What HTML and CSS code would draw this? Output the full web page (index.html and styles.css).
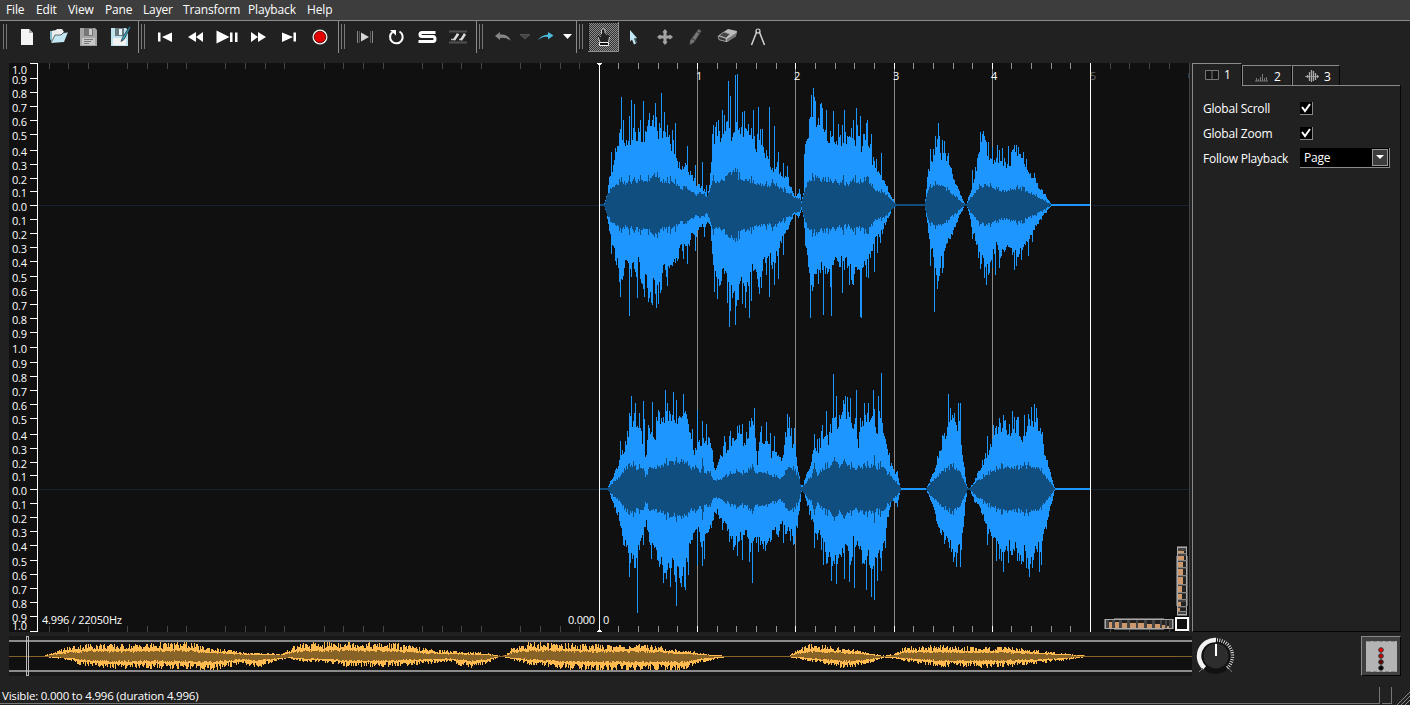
FILE: index.html
```html
<!DOCTYPE html>
<html lang="en">
<head>
<meta charset="utf-8">
<title>Audio viewer</title>
<link rel="stylesheet" href="styles.css">
</head>
<body>
<div class="window">
  <nav class="menubar">
    <span class="m-file">File</span><span class="m-edit">Edit</span><span class="m-view">View</span><span class="m-pane">Pane</span><span class="m-layer">Layer</span><span class="m-transform">Transform</span><span class="m-playback">Playback</span><span class="m-help">Help</span>
  </nav>
  <div class="toolbars">
    <div class="bar bar-file"><i class="handle"></i>
      <svg class="ico" viewBox="0 0 31 30"><path d="M9 7h8l4 4v12H9z" fill="#f4f4f4"/><path d="M17 7v4h4z" fill="#aaa"/></svg>
      <svg class="ico" viewBox="0 0 31 30"><path d="M8 9l5-1 1-1h5l2 3-10 9-3 2z" fill="#eee"/><path d="M7 9l2 0v11l-2-3z" fill="#86bdcb"/><path d="M8 21l4-8 6 0 2-2 5-1-4 10z" fill="#c2e7f3"/><path d="M8 21l4-8h6l2-2 5-1" fill="none" stroke="#333" stroke-width=".7"/></svg>
      <svg class="ico" viewBox="0 0 31 30"><path d="M6 6h15l2 2v16H6z" fill="#a5a5a5"/><path d="M10 6h9v8h-9z" fill="#777"/><path d="M15 7h3v6h-3z" fill="#ccc"/><path d="M8 16h13v7H8z" fill="#c7c7c7"/><path d="M10 17.500h9M10 19.500h7M10 21.500h5" stroke="#777"/></svg>
      <svg class="ico" viewBox="0 0 31 30"><path d="M6 6h15l2 2v16H6z" fill="#bfe2ec"/><path d="M10 6h9v8h-9z" fill="#687980"/><path d="M14 7h3v6h-3z" fill="#e8f4f7"/><path d="M8 16h13v7H8z" fill="#f2f2f2"/><path d="M24.500 4.500l-7 11-1.500 4 3-2 6.500-12z" fill="#37a4c0" stroke="#24363c" stroke-width=".8"/></svg>
    </div>
    <div class="bar bar-play"><i class="handle"></i>
      <svg class="ico" viewBox="0 0 31 30"><path d="M8 10.500h2.500v9H8zM22 10.500v9.500L12 15z" fill="#fff"/></svg>
      <svg class="ico" viewBox="0 0 31 30"><path d="M15 10v10l-8-5zM22 10v10l-7-5z" fill="#fff"/></svg>
      <svg class="ico" viewBox="0 0 31 30"><path d="M4.500 8.500v13l13-6.500zM18 10.500h2.500v9.500H18zM23 10.500h2.500v9.500H23z" fill="#fff"/></svg>
      <svg class="ico" viewBox="0 0 31 30"><path d="M8 10v10l7-5zM15 10v10l8-5z" fill="#fff"/></svg>
      <svg class="ico" viewBox="0 0 31 30"><path d="M8 10.500v9.500l11-5zM19.500 10.500H22v9h-2.500z" fill="#fff"/></svg>
      <svg class="ico" viewBox="0 0 31 30"><circle cx="15" cy="15" r="7.500" fill="#f5f5f5"/><circle cx="15" cy="15" r="5.800" fill="#e40000" stroke="#400" stroke-width=".8"/></svg>
    </div>
    <div class="bar bar-mode"><i class="handle"></i>
      <svg class="ico" viewBox="0 0 31 30"><path d="M7.500 9v12M22.500 9v12" stroke="#8a8a8a"/><path d="M9.500 9v12M20.500 9v12" stroke="#555"/><path d="M11 10.500v9l8-4.500z" fill="#d5d5d5"/></svg>
      <svg class="ico" viewBox="0 0 31 30"><path d="M18.500 9.500a6.300 6.300 0 1 1-7 .5" fill="none" stroke="#fff" stroke-width="2"/><path d="M9 8h6v5.500z" fill="#fff"/></svg>
      <svg class="ico" viewBox="0 0 31 30"><path d="M23.500 10.500H10q-2 0-2 2t2 2h11q2 0 2 2.500t-2 2.500H6.500" fill="none" stroke="#fff" stroke-width="3"/></svg>
      <svg class="ico" viewBox="0 0 31 30"><path d="M6 9.500h18M6 20.500h18" stroke="#505050" stroke-width="2"/><path d="M8 17.500h3M13 12.500h3M16 17.500h3M20 12.500h2" fill="none" stroke="#bbb" stroke-width="1.500"/><path d="M15 12l-4 6M22 12l-4 6" stroke="#ddd" stroke-width="2.400"/></svg>
    </div>
    <div class="bar bar-edit"><i class="handle"></i>
      <svg class="ico" viewBox="0 0 31 30"><path d="M7 14l5-4v2.500q8-1 11 6.500-5-4-11-3v2z" fill="#858585"/></svg>
      <svg class="ico-drop" viewBox="0 0 12 30"><path d="M1 12.500h10L6 17z" fill="#444" stroke="#666" stroke-width=".6"/></svg>
      <svg class="ico" viewBox="0 0 31 30"><path d="M7 18.500q2-5 10-6V10l5.500 3.500-5.500 4v-2.500q-6-1-10 3.500z" fill="#4cbada"/></svg>
      <svg class="ico-drop" viewBox="0 0 12 30"><path d="M1 12h9l-4.500 5z" fill="#fff"/></svg>
    </div>
    <div class="bar bar-tools"><i class="handle"></i>
      <svg class="ico ico-active" viewBox="0 0 31 30"><defs><pattern id="dither" width="2" height="2" patternUnits="userSpaceOnUse"><path d="M0 0h1v1H0zM1 1h1v1H1z" fill="#8b8b8b"/></pattern></defs><rect width="31" height="30" fill="#333"/><rect width="31" height="30" fill="url(#dither)"/><path d="M0 .5h30M.5 1v29" stroke="#191919"/><path d="M30.500 0v29.500H0" fill="none" stroke="#909090"/><path d="M14 8q1.500-2 3 0v4.500l4 1 1 1-1 6h-9l-3-5 1-2 3 2z" fill="#222"/><path d="M13.500 12V8q1.500-3 3.500 0v3M10 15l2 5M21.500 15l-1 5" fill="none" stroke="#ccc"/><path d="M11.500 20.500h9v3h-9z" fill="#111" stroke="#eee"/></svg>
      <svg class="ico" viewBox="0 0 31 30"><path d="M11 8l7 8-3 .5 2 5-2 1-2-5-2 2z" fill="#c2e8f5"/><path d="M18 16l-2 1 2 4" fill="none" stroke="#54717d"/></svg>
      <svg class="ico" viewBox="0 0 31 30"><path d="M15 7l2.500 3-1 1v2.500H19l1-1L23 15l-3 2.500-1-1h-2.500V19l1 1L15 23l-2.500-3 1-1v-2.500H11l-1 1L7 15l3-2.500 1 1h2.500V11l-1-1z" fill="#a2a2a2"/></svg>
      <svg class="ico" viewBox="0 0 31 30"><path d="M17.500 7.500l2.500 1.500-7 11-4 2.500.5-4z" fill="#777" stroke="#666" stroke-width=".7"/><path d="M16 9.500l3 2M11 16.500l3 2" stroke="#333"/></svg>
      <svg class="ico" viewBox="0 0 31 30"><path d="M6 14l10-7 9 2-1 5-9 6-8-2z" fill="#bcbcbc"/><path d="M7 13.500l5-3.500 6 2-4 4z" fill="#444" stroke="#aaa" stroke-width=".7"/><path d="M6 14l8 2.500v3l-7-2z" fill="#333" stroke="#aaa" stroke-width=".7"/><path d="M15 17l9-6v3.500l-9 5z" fill="#777"/></svg>
      <svg class="ico" viewBox="0 0 31 30"><path d="M14 9L8.500 23M16 9l5.500 14" stroke="#d2d2d2" stroke-width="1.500"/><circle cx="15" cy="9" r="2" fill="#222" stroke="#ddd" stroke-width="1.200"/></svg>
    </div>
  </div>
  <main class="workspace">
    <section class="pane">
      <svg id="pane" class="pane-view" viewBox="9 63 1181 569" width="1181" height="569"></svg>
    </section>
    <aside class="side">
      <div class="tabs">
        <div class="tab tab-on"><svg width="15" height="11" viewBox="0 0 15 11"><path d="M.5.5h13v9H.5zM7 .5v9" fill="#151515" stroke="#777"/></svg><span>1</span></div>
        <div class="tab tab-two"><svg width="15" height="11" viewBox="0 0 15 11"><path d="M1.500 7v3M3.500 8v2M5.500 6v4M7.500 3v7M9.500 7v3M11.500 6v4M0 10h13" stroke="#777"/></svg><span>2</span></div>
        <div class="tab tab-three"><svg width="15" height="13" viewBox="0 0 15 13"><path d="M0 6.500h14" stroke="#888"/><path d="M2.500 5v3M4.500 2v9M6.500 0v12M8.500 1v10M10.500 3v7M12.500 5v3" stroke="#aaa" stroke-width="1.300"/></svg><span>3</span></div>
      </div>
      <div class="page">
        <div class="row"><span class="lab lab-scroll">Global Scroll</span><span class="check"><svg width="10" height="10" viewBox="0 0 10 10"><path d="M1 4l3 4 5-7" fill="none" stroke="#fff" stroke-width="2"/></svg></span></div>
        <div class="row"><span class="lab lab-zoom">Global Zoom</span><span class="check"><svg width="10" height="10" viewBox="0 0 10 10"><path d="M1 4l3 4 5-7" fill="none" stroke="#fff" stroke-width="2"/></svg></span></div>
        <div class="row"><span class="lab">Follow Playback</span><span class="combo"><span class="value">Page</span><i class="drop"><svg width="8" height="4" viewBox="0 0 8 4"><path d="M0 0h8L4 4z" fill="#fff"/></svg></i></span></div>
      </div>
    </aside>
  </main>
  <footer class="transport">
    <svg id="overview" class="overview" viewBox="9 636 1183 40" width="1183" height="40"></svg>
    <svg class="knob" viewBox="1196 636 40 40" width="40" height="40">
      <circle cx="1215.500" cy="656" r="17.800" fill="#111"/>
      <circle cx="1216" cy="656" r="12.500" fill="#2d2d2d"/>
      <path d="M1204.500 668A16 16 0 0 1 1216 640" fill="none" stroke="#f2f2f2" stroke-width="4.500"/>
      <path d="M1217 640A16 16 0 0 1 1227 668" fill="none" stroke="#e0e0e0" stroke-width="3.500" stroke-dasharray="1 1.300"/>
      <path d="M1216 644v12" stroke="#fff" stroke-width="2"/><path d="M1199 672l4-4M1232 672l-5-6" stroke="#777"/>
    </svg>
    <div class="meter"><svg width="31" height="31" viewBox="0 0 31 31"><rect width="31" height="31" rx="1" fill="#b4b4b4"/><path d="M1 .5h29M1 30.500h29" stroke="#888" stroke-dasharray="4 2"/><g stroke="#333"><circle cx="15" cy="9" r="2.300" fill="#f00"/><circle cx="15" cy="15" r="2.300" fill="#c00000"/><circle cx="15" cy="21" r="2.300" fill="#620000"/><circle cx="15" cy="27" r="2.300" fill="#000"/></g></svg></div>
  </footer>
  <div class="status">
    <div class="message"><span>Visible: 0.000 to 4.996 (duration 4.996)</span></div>
    <div class="slot"></div>
    <svg class="grip" width="18" height="18" viewBox="0 0 18 18"><path d="M5 18L18 5M9 18l9-9M13 18l5-5" stroke="#888"/></svg>
  </div>
</div>
<script src="script.js"></script>
</body>
</html>
```

FILE: styles.css
```css
* { box-sizing: border-box; }
body { margin: 0; background: #212121; color: #fff; font: 11.5px/16px "Open Sans", "Noto Sans", sans-serif; }
.window { width: 1410px; height: 705px; display: flex; flex-direction: column; overflow: hidden; }
svg { display: block; flex: none; }

.menubar { height: 20px; flex: none; display: flex; padding: 2px 0 0 6px; background: #3d3d3d; font-size: 12px; letter-spacing: -.15px; white-space: nowrap; }
.m-file { width: 30px; }
.m-edit { width: 32px; }
.m-view { width: 37px; }
.m-pane { width: 38px; }
.m-layer { width: 40px; }
.m-transform { width: 65px; }
.m-playback { width: 59px; }

.toolbars { height: 33px; flex: none; display: flex; }
.bar { display: flex; padding-top: 1px; border-top: 1px solid #8a8a8a; border-left: 1px solid #8a8a8a; }
.bar-file { width: 138px; border-left: 0; padding-left: 1px; }
.bar-play { width: 200px; }
.bar-mode { width: 138px; }
.bar-edit { width: 100px; }
.bar-tools { flex: 1; }
.handle { flex: none; width: 4px; height: 25px; margin: 2px 5px 0 2px; border-left: 1px solid #777; border-right: 1px solid #777; }
.ico { width: 31px; height: 30px; }
.ico-drop { width: 12px; height: 30px; }

.workspace { height: 579px; flex: none; display: flex; padding: 10px 0 0 9px; }
.pane { width: 1181px; background: #101010; border-right: 1px solid #444; }
.pane-view { font-size: 11px; fill: #fff; }
.dim { fill: #666; }

.side { width: 209px; margin-left: 2px; display: flex; flex-direction: column; }
.tabs { display: flex; height: 22px; align-items: flex-end; }
.tab { display: flex; align-items: center; border-top: 1px solid #8a8a8a; border-right: 1px solid #050505; border-left: 1px solid #8a8a8a; height: 20px; gap: 4px; font-size: 12px; }
.tab-on { width: 50px; height: 22px; padding: 1px 0 0 12px; }
.tab-two { width: 50px; padding: 2px 0 0 12px; }
.tab-three { width: 48px; padding: 2px 0 0 12px; }
.page { flex: 1; padding: 11px 10px 0 10px; border-left: 1px solid #8a8a8a; border-right: 1px solid #050505; border-bottom: 1px solid #050505; background: linear-gradient(#8a8a8a, #8a8a8a) 49px 0 / 160px 1px no-repeat; }
.row { display: flex; height: 25px; align-items: center; }
.lab { width: 97px; padding-top: 1px; font-size: 12px; letter-spacing: -.2px; white-space: nowrap; }
.check { width: 13px; height: 13px; padding: 1px; background: #000; border-right: 1px solid #8a8a8a; border-bottom: 1px solid #8a8a8a; }
.combo { display: flex; width: 90px; height: 20px; margin-top: -2px; padding-left: 4px; align-items: center; justify-content: space-between; background: #000; border-right: 1px solid #8a8a8a; border-bottom: 1px solid #8a8a8a; font-size: 12px; letter-spacing: -.2px; }
.value { padding-top: 2px; }
.drop { width: 16px; height: 17px; margin-right: 1px; display: flex; align-items: center; justify-content: center; background: #3c3c3c; border: 1px solid #999; }

.transport { height: 55px; flex: none; display: flex; padding: 4px 9px 0; }
.knob { margin-left: 4px; }
.meter { margin-left: auto; width: 40px; height: 40px; padding: 4px; background: #404040; border: 1px solid #8a8a8a; border-right-color: #050505; border-bottom-color: #050505; }

.status { height: 18px; flex: none; display: flex; }
.message { width: 1380px; height: 17px; padding-left: 2px; border-right: 1px solid #777; border-bottom: 1px solid #777; line-height: 17px; letter-spacing: -.2px; }
.slot { width: 10px; height: 17px; margin-left: 2px; border-right: 1px solid #777; border-bottom: 1px solid #777; }
```

FILE: script.js
```js
// Peak tables: horizontal and vertical units are thirds of a pixel.
const parse = s => s.trim().split(/\s+/).map(p => p.split(',').map(Number));
const ch1 = {
  y: 205, c: 435,
  top: `30,433 42,433 50,405 55,385 60,340 66,335 74,290 82,255 88,215 100,230 108,260 118,225 128,250 134,220 142,235 150,210 165,240 175,185 190,185 200,220 208,200 220,205 230,215 240,255 250,260 262,310 272,315 285,325 300,335 310,360 320,375 330,375 345,395 352,405 362,345 367,250 375,215 385,215 395,240 405,195 415,190 425,230 435,180 445,180 455,200 465,220 475,215 490,215 500,260 510,235 520,285 530,275 540,310 550,330 562,320 575,345 590,350 605,385 612,405 620,410 628,385 634,420 640,400 645,250 655,240 662,160 672,165 682,200 692,160 700,200 712,230 725,235 740,240 750,225 762,250 770,240 790,210 798,240 805,210 812,270 820,230 830,220 838,240 846,300 855,310 865,325 875,345 885,375 895,390 905,410 915,430 924,433 1004,433 1010,375 1016,325 1025,300 1033,270 1040,235 1047,250 1053,290 1060,255 1068,290 1076,300 1086,340 1095,360 1105,385 1115,410 1124,433 1130,433 1135,410 1142,395 1150,370 1158,330 1166,270 1174,245 1182,225 1190,260 1200,300 1210,300 1220,290 1230,300 1240,305 1250,315 1260,320 1268,270 1276,260 1284,300 1295,290 1305,320 1315,325 1325,350 1335,355 1345,380 1355,390 1365,405 1375,420 1384,433 1500,433`,
  topSpikes: `64,275 94,112 100,180 118,168 124,120 134,132 152,180 160,123 176,180 188,180 196,128 214,100 223,155 248,210 256,188 292,258 316,315 337,305 350,375 386,180 398,150 404,165 415,64 421,108 436,45 442,42 457,155 463,152 484,205 490,150 505,142 517,208 538,142 553,198 565,275 580,310 592,318 670,84 691,132 709,150 730,152 746,192 763,150 772,228 758,195 763,150 785,205 790,180 799,143 803,195 811,167 832,180 844,222 874,278 893,378 1021,268 1036,228 1045,188 1057,240 1075,280 1147,330 1180,213 1189,245 1207,262 1222,255 1237,265 1255,258 1264,275 1273,256 1279,255 1285,260 1300,275 1309,298 1321,340 1333,338`,
  bottom: `30,437 42,437 52,470 58,510 66,545 75,580 82,600 88,665 98,670 105,615 112,620 120,640 130,620 138,655 146,575 155,680 165,625 175,700 185,700 192,680 200,720 210,665 220,635 230,640 240,630 250,620 260,595 270,560 280,560 295,550 305,530 315,520 325,515 335,495 345,500 355,490 362,500 366,580 372,650 380,660 390,670 400,640 408,660 418,715 430,690 440,690 450,660 460,650 470,690 480,665 490,625 500,645 510,660 520,615 530,610 540,600 550,600 560,590 570,560 580,530 590,515 600,490 612,465 628,470 636,445 642,490 650,580 658,630 665,670 675,640 685,640 695,620 705,630 715,650 725,630 735,615 745,600 755,610 770,600 785,640 800,620 812,640 825,620 838,600 845,560 855,540 865,530 875,520 885,490 895,470 905,450 915,440 924,437 1004,437 1010,480 1016,530 1025,570 1033,620 1040,650 1050,620 1060,590 1070,550 1085,530 1095,500 1105,475 1115,455 1124,437 1130,437 1140,470 1150,520 1160,560 1170,590 1182,605 1190,630 1200,600 1210,580 1222,550 1230,590 1242,570 1255,555 1268,580 1280,590 1295,570 1310,550 1325,530 1335,500 1350,485 1365,460 1384,437 1500,437`,
  bottomSpikes: `64,582 91,712 118,768 142,715 163,712 184,730 200,745 214,690 232,678 280,598 292,612 316,574 343,532 373,695 382,718 417,802 436,794 457,733 466,745 478,775 484,722 505,682 514,684 538,712 553,676 565,658 580,585 661,775 700,765 724,768 757,698 778,676 787,672 812,770 815,775 829,652 835,655 853,635 862,578 871,550 1021,618 1033,757 1042,688 1057,638 1147,538 1171,628 1183,655 1189,674 1207,625 1216,646 1228,625 1273,630 1285,590 1315,588 1327,545`,
  inner: `30,2 42,2 50,25 60,45 75,60 90,75 114,62 118,95 122,65 150,75 180,78 200,82 225,70 250,72 275,50 300,48 315,30 335,38 350,22 362,50 370,75 400,75 415,95 437,108 445,85 460,80 490,70 510,65 540,58 550,70 565,55 580,45 600,35 612,22 628,22 634,5 640,30 650,65 665,78 680,80 700,72 740,72 755,65 758,90 762,60 790,75 810,72 835,75 850,50 875,40 895,25 910,8 922,2 1004,2 1012,40 1025,58 1040,62 1055,60 1075,45 1095,28 1110,12 1124,2 1130,2 1140,20 1155,40 1170,55 1190,58 1207,55 1225,45 1250,42 1285,52 1310,42 1340,28 1360,15 1384,1 1500,1`
};
const ch2 = {
  y: 489, c: 387,
  top: `30,385 52,385 60,370 66,355 75,340 84,315 90,290 100,270 108,260 115,215 122,200 135,180 145,200 155,240 163,215 167,310 175,205 185,220 195,240 205,190 218,210 228,155 240,155 250,145 262,180 275,145 282,130 292,185 302,210 308,240 315,290 325,240 335,270 345,240 355,250 365,280 375,325 385,305 395,290 405,270 415,255 425,240 435,225 445,210 455,240 465,240 475,240 482,185 492,190 502,305 510,230 522,250 535,245 545,290 555,265 565,285 575,310 585,270 592,210 600,200 608,270 615,230 622,320 632,375 640,375 648,340 660,330 668,280 675,250 685,270 695,235 705,210 715,240 725,190 735,165 745,195 755,170 765,150 780,150 788,205 798,170 805,250 812,200 825,160 838,190 847,170 853,150 860,240 868,160 876,185 885,225 895,285 905,320 915,335 922,330 929,375 931,385 1008,385 1016,370 1025,355 1035,330 1047,285 1058,240 1070,205 1078,190 1088,170 1100,200 1106,180 1114,250 1122,310 1128,370 1133,385 1138,385 1150,370 1160,350 1172,330 1185,290 1195,280 1205,240 1215,210 1228,195 1242,210 1255,205 1270,210 1280,200 1295,230 1305,215 1318,180 1330,200 1340,180 1355,205 1362,270 1372,300 1382,345 1394,385 1500,385`,
  topSpikes: `91,242 118,158 124,108 136,130 148,160 160,123 187,125 199,172 208,155 226,90 249,95 259,120 280,102 292,178 322,150 337,182 349,192 358,235 403,228 421,212 442,198 457,192 484,175 493,145 514,198 529,185 541,218 553,228 586,215 592,162 598,172 613,205 673,222 698,195 709,152 730,42 739,108 759,120 773,112 780,115 799,90 823,128 835,128 850,90 865,108 874,38 1075,102 1082,143 1093,158 1105,128 1111,130 1192,228 1228,175 1240,165 1267,153 1285,170 1303,165 1315,162 1324,140 1333,132 1339,145`,
  bottom: `30,389 52,389 60,400 66,420 75,440 85,460 92,515 105,540 118,600 130,580 142,590 150,560 160,530 168,485 178,550 190,570 200,590 210,600 220,620 232,620 245,620 258,620 270,640 285,650 295,560 305,540 315,530 325,510 338,560 350,520 362,500 375,455 382,455 395,485 410,510 425,530 440,545 455,530 468,520 480,560 490,560 500,540 515,555 525,560 540,530 555,500 565,500 575,490 588,520 600,515 613,540 625,470 635,390 642,400 655,440 668,490 680,510 695,540 710,580 725,620 740,600 755,590 765,560 780,590 790,550 805,560 820,600 835,590 850,600 862,590 875,585 885,540 892,480 905,420 915,425 922,440 930,395 931,389 1008,389 1018,410 1030,440 1042,490 1055,520 1070,540 1085,570 1098,590 1110,560 1120,500 1126,430 1132,389 1140,390 1155,425 1168,440 1182,480 1195,500 1207,540 1220,560 1232,590 1245,570 1258,550 1272,560 1285,580 1300,570 1315,590 1328,600 1340,560 1355,580 1363,500 1375,470 1385,430 1394,389 1500,389`,
  bottomSpikes: `118,650 136,625 142,760 184,598 208,622 220,670 229,658 241,682 259,738 274,682 283,682 295,645 322,615 337,618 343,596 430,570 443,588 457,600 478,605 486,668 505,575 526,572 565,532 580,550 613,552 673,565 700,615 724,662 739,672 763,658 778,666 793,684 829,690 844,710 853,720 862,662 874,632 1090,606 1099,622 1111,620 1192,555 1219,602 1240,635 1255,608 1300,606 1318,650 1327,625 1348,635`,
  inner: `30,2 52,2 70,20 90,40 118,75 140,65 160,62 167,35 178,60 205,68 240,80 280,85 300,60 320,65 333,50 337,90 342,52 360,50 373,25 395,32 420,45 445,52 470,45 487,72 495,50 530,50 550,38 575,32 595,65 605,65 625,40 634,5 650,20 665,40 673,75 682,38 700,60 740,85 750,65 763,90 770,75 795,60 820,72 848,65 853,100 858,65 875,70 895,45 915,22 930,10 932,1 1008,1 1025,22 1050,45 1070,60 1088,68 1105,60 1120,30 1132,2 1138,2 1160,22 1190,45 1220,58 1240,66 1280,62 1300,68 1350,62 1365,40 1394,1 1500,1`
};

function at(points, x, col) {
  let i = 1;
  while (i < points.length - 1 && points[i][0] < x) i++;
  const a = points[i - 1], b = points[i];
  const t = Math.max(0, Math.min(1, (x - a[0]) / (b[0] - a[0])));
  return a[col] + (b[col] - a[col]) * t;
}
function noise(n, seed) {
  const v = Math.sin(n * 12.9898 + seed * 78.233) * 43758.5453;
  return v - Math.floor(v);
}
function columns(x0, x1, extent) {
  let d = '';
  for (let x = x0; x < x1; x++) {
    const [a, b] = extent(x);
    d += `M${x} ${a.toFixed(1)}h1V${b.toFixed(1)}h-1z`;
  }
  return d;
}
const spikeMap = s => new Map(parse(s).map(([x, y]) => [590 + Math.floor(x / 3), y]));
// Mostly small variation, with an occasional taller column.
const jitter = (x, seed) => .87 + .18 * noise(x, seed) + (noise(x, seed + 20) > .75 ? .17 : 0);

function channel(ch, seed) {
  const top = parse(ch.top), bottom = parse(ch.bottom), inner = parse(ch.inner);
  const ts = spikeMap(ch.topSpikes), bs = spikeMap(ch.bottomSpikes);
  const outer = columns(600, 1090, x => {
    const u = (x - 590) * 3 + 1;
    let a = ch.c - at(top, u, 1), b = at(bottom, u, 1) - ch.c;
    if (a > 4) a *= jitter(x, seed);
    if (b > 4) b *= jitter(x, seed + 1);
    if (ts.has(x)) a = ch.c - ts.get(x);
    if (bs.has(x)) b = bs.get(x) - ch.c;
    return [ch.y - a / 3, ch.y + b / 3];
  });
  const core = columns(600, 1090, x => {
    const v = at(inner, (x - 590) * 3 + 1, 1);
    const h = v * (v > 4 ? jitter(x, seed + 2) : 1) / 3;
    return [ch.y - h, ch.y + h];
  });
  return `<path d="M600 ${ch.y - 1}h490v2H600z" fill="#1c73bd"/><path d="${outer}" fill="#1e96ff"/><path d="${core}" fill="#104e80"/>`;
}

const label = (x, y, s, cls = '', w = 0) =>
  `<text x="${x}" y="${y}" class="${cls}"${w ? ` textLength="${w}"` : ''}>${s}</text>`;
let out = '<g shape-rendering="crispEdges">';
for (const y of [205, 489]) out += `<path d="M38 ${y}.5H599M1091 ${y}.5H1189" stroke="#152232"/>`;
for (let k = -28; k <= 29; k++) {
  const x = Math.floor(599.3 + k * 19.65), major = k % 5 === 0;
  if (major && (k < 0 || k > 25)) continue;
  const color = k < 0 || k > 25 ? '#464646' : major ? '#fff' : '#929292';
  if (major && k > 0) out += `<path d="M${x}.5 63V632" stroke="#8b8b8b"/>`;
  out += `<path d="M${x}.5 63v6M${x}.5 626v6" stroke="${color}"/>`;
}
out += channel(ch1, 3) + channel(ch2, 8);
out += '<path d="M599.5 63V632M1090.5 63V632M37.500 63V632" stroke="#fff"/><path d="M597 63h5v1h-1v1h-3v-1h-1zM597 632h5v-1h-1v-1h-3v1h-1z" fill="#fff"/>';
const scale = [63, 78, 92, 106, 120, 134, 150, 164, 178, 191, 205, 219, 233, 247, 261, 276, 290, 304, 318, 332];
let ys = '';
for (let i = 0; i <= 40; i++) {
  const y = i === 40 ? 631 : scale[i % 20] + (i >= 20 ? 284 : 0);
  out += `<path d="M30 ${y}.5h8" stroke="#fff"/>`;
  const value = Math.abs(10 - i % 20) / 10;
  const ty = i === 0 ? 74 : i === 40 ? 630 : y + 6;
  ys += label(12, ty, value.toFixed(1), '', 15);
}
out += '</g>' + ys;
[696, 794, 893, 991].forEach((x, i) => { out += label(x, 80, i + 1); });
out += label(1090, 80, 5, 'dim') + '<path d="M1188 73h1v5h-1z" fill="#203e59"/>';
out += label(42, 624, '4.996 / 22050Hz', '', 80) + label(568, 624, '0.000', '', 27) + label(603, 624, '0');

// Thumbwheels and the reset square at the lower right of the pane.
out += '<g shape-rendering="crispEdges"><path d="M1177 546h10l1 20v30l-1 20h-10l-1-20v-30z" fill="#666"/><rect x="1177.500" y="547.500" width="9" height="67" fill="#444" stroke="#aaa"/>';
[551, 556, 562, 569, 577, 586, 594, 602, 608].forEach((y, i) => {
  const h = [2, 4, 5, 6, 7, 6, 5, 4, 3][i], w = [6, 6, 5, 5, 5, 4, 4, 3, 2][i];
  out += `<path d="M1178 ${y}h8v${h}h-8z" fill="#222"/><path d="M1178 ${y}h${w}v${h}h-${w}z" fill="#cc986c"/><path d="M1178 ${y + h}.5h9" stroke="#888"/>`;
});
out += '<path d="M1104 619l20-1h30l20 1v10l-20 1h-30l-20-1z" fill="#666"/><rect x="1105.500" y="619.500" width="67" height="9" fill="#444" stroke="#aaa"/>';
[1109, 1115, 1122, 1130, 1138, 1147, 1155, 1162, 1167].forEach((x, i) => {
  const w = [3, 4, 5, 6, 6, 5, 5, 3, 2][i], h = [6, 6, 5, 5, 5, 4, 4, 3, 2][i];
  out += `<path d="M${x} 620h${w}v8h-${w}z" fill="#222"/><path d="M${x} ${628 - h}h${w}v${h}h-${w}z" fill="#cc986c"/>`;
});
out += '<rect x="1174" y="616" width="15" height="15" fill="#000"/><rect x="1176" y="618" width="12" height="12" fill="#111" stroke="#fff" stroke-width="1.500"/></g>';
document.getElementById('pane').innerHTML = out;

// Overview strip: x, height above and below the axis, in pixels.
const env = parse(`28,.6,.6 44,.6,.6 50,3,1 58,5,2 68,8,3 78,10,7 95,11,9 115,10,11 150,11,10 190,12,11 205,8,12 225,6,10 240,4,6 258,3,9 270,3,6 280,2,3 290,7,2 300,11,4 330,12,6 345,13,9 380,11,9 397,11,8 430,6,6 450,5,5 470,4,10 485,3,7 495,1.500,2 500,.7,.7 505,1,1 512,8,3 530,12,7 560,11,10 590,10,12 630,10,12 660,9,11 680,5,13 690,5,10 700,3,5 712,1.500,3 728,.6,.6 789,.6,.6 797,6,2 810,10,4 825,9,7 845,7,10 860,5,9 875,2,4 884,.6,1 895,3,2 905,8,4 920,9,6 940,9,9 970,8,9 1000,8,9 1030,6,7 1060,3,4 1083,1,1 1087,.6,.6 1176,.6,.6`);
const strip = (seed, scaleBy, rough) => columns(28, 1176, x => {
  const a = at(env, x, 1), b = at(env, x, 2);
  const f = s => a < 1 && b < 1 ? 1 : scaleBy * (rough + (1.300 - rough) * noise(x, s));
  return [656.3 - Math.max(.6, a * f(seed)), 656.4 + Math.max(.6, b * f(seed + 1))];
});
document.getElementById('overview').innerHTML = `<g shape-rendering="crispEdges">
<rect x="9" y="636" width="1183" height="40" fill="#181818"/><rect x="9" y="642" width="1183" height="28" fill="#101010"/>
<path d="M9 656.500H1192" stroke="#80602b"/><path d="M28 656.500H1176" stroke="#b4812f"/>
<path d="${strip(4, .96, .66)}" fill="#ffba50"/><path d="${strip(7, .42, .85)}" fill="#886328"/>
<path d="M9 641H1192M9 671H1192" stroke="#8b8b8b" stroke-width="2"/>
<rect x="26.500" y="636.500" width="2" height="39" fill="none" stroke="#bbb"/></g>`;
```
